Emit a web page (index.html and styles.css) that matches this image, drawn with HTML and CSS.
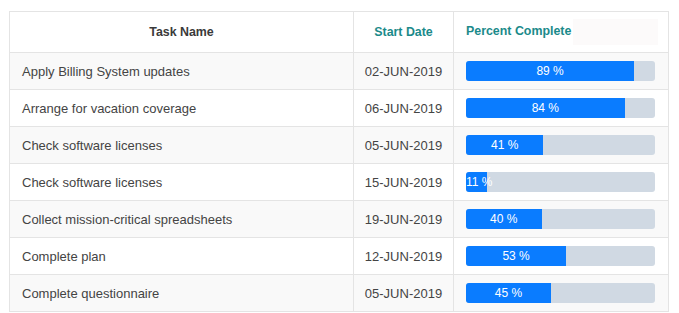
FILE: index.html
```html
<!DOCTYPE html>
<html>
<head>
<meta charset="utf-8">
<link rel="stylesheet" href="styles.css">
</head>
<body>
<div class="wrap">
<table class="grid">
  <colgroup><col class="c1"><col class="c2"><col class="c3"></colgroup>
  <thead>
    <tr>
      <th class="h-task">Task Name</th>
      <th class="h-date">Start Date</th>
      <th class="h-pct">Percent Complete<span class="ghost"></span></th>
    </tr>
  </thead>
  <tbody>
    <tr class="odd"><td class="task">Apply Billing System updates</td><td class="date">02-JUN-2019</td><td class="pct"><div class="track"><div class="fill" style="width:89%">89 %</div></div></td></tr>
    <tr><td class="task">Arrange for vacation coverage</td><td class="date">06-JUN-2019</td><td class="pct"><div class="track"><div class="fill" style="width:84%">84 %</div></div></td></tr>
    <tr class="odd"><td class="task">Check software licenses</td><td class="date">05-JUN-2019</td><td class="pct"><div class="track"><div class="fill" style="width:41%">41 %</div></div></td></tr>
    <tr><td class="task">Check software licenses</td><td class="date">15-JUN-2019</td><td class="pct"><div class="track"><div class="fill small" style="width:11%">11 %</div></div></td></tr>
    <tr class="odd"><td class="task">Collect mission-critical spreadsheets</td><td class="date">19-JUN-2019</td><td class="pct"><div class="track"><div class="fill" style="width:40%">40 %</div></div></td></tr>
    <tr><td class="task">Complete plan</td><td class="date">12-JUN-2019</td><td class="pct"><div class="track"><div class="fill" style="width:53%">53 %</div></div></td></tr>
    <tr class="odd"><td class="task">Complete questionnaire</td><td class="date">05-JUN-2019</td><td class="pct"><div class="track"><div class="fill" style="width:45%">45 %</div></div></td></tr>
  </tbody>
</table>
</div>
</body>
</html>
```
FILE: styles.css
```css
html, body {
  margin: 0;
  padding: 0;
  background: #fff;
}
body {
  font-family: "Liberation Sans", Arial, sans-serif;
  font-size: 13px;
  color: #444;
  overflow: hidden;
}
.wrap {
  padding: 11px 0 0 9px;
}
.grid {
  border-collapse: collapse;
  table-layout: fixed;
  width: 659px;
}
.c1 { width: 344px; }
.c2 { width: 100px; }
.c3 { width: 215px; }
.grid th, .grid td {
  border: 1px solid #e4e4e4;
  padding: 0 12px;
  vertical-align: middle;
  white-space: nowrap;
}
.grid th {
  height: 40px;
  font-weight: bold;
  font-size: 12.4px;
}
.grid td {
  height: 36px;
}
.h-task {
  text-align: center;
  color: #3a3a3a;
}
.h-date {
  text-align: center;
  color: #1b8a8a;
}
.h-pct {
  text-align: left;
  color: #1b8a8a;
}
.ghost {
  display: inline-block;
  width: 85px;
  height: 26px;
  margin-left: 2px;
  vertical-align: middle;
  background: #fcfafa;
}
tr.odd td {
  background: #f9f9f9;
}
.task {
  text-align: left;
}
.grid td.date {
  text-align: center;
  padding: 0;
}
.grid td.pct {
  padding-right: 13px;
}
.track {
  height: 20px;
  background: #d0d9e3;
  border-radius: 3px;
}
.fill {
  height: 20px;
  background: #0a7cff;
  border-radius: 3px 0 0 3px;
  color: #fff;
  font-size: 12px;
  line-height: 20px;
  text-align: center;
  white-space: nowrap;
}
.fill.small {
  text-align: left;
}
```
